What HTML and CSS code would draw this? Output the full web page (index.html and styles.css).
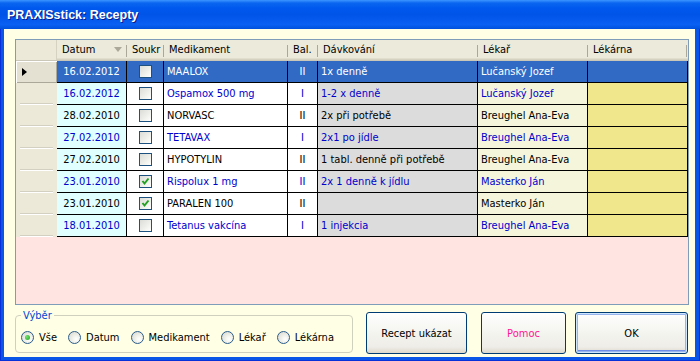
FILE: index.html
```html
<!DOCTYPE html>
<html lang="sk">
<head>
    <meta charset="UTF-8">
    <meta name="viewport" content="width=device-width, initial-scale=1.0">
    <title>PRAXISstick: Recepty</title>
    <link rel="stylesheet" href="styles.css">
</head>
<body>
    <div class="window">
        <div class="titlebar"><span class="title">PRAXISstick: Recepty</span></div>
        <div class="client">
            <div class="grid">
                <div class="row head">
                    <div class="rh corner"></div>
                    <div class="hc c-datum">Datum<span class="sort"></span></div>
                    <div class="hc c-soukr">Soukr</div>
                    <div class="hc c-med">Medikament</div>
                    <div class="hc c-bal">Bal.</div>
                    <div class="hc c-dav">Dávkování</div>
                    <div class="hc c-lekar">Lékař</div>
                    <div class="hc c-lekarna">Lékárna</div>
                </div>
                <div class="row sel">
                    <div class="rh current"><span class="arrow"></span></div>
                    <div class="cell c-datum">16.02.2012</div>
                    <div class="cell c-soukr"><span class="chk"></span></div>
                    <div class="cell c-med">MAALOX</div>
                    <div class="cell c-bal">II</div>
                    <div class="cell c-dav">1x denně</div>
                    <div class="cell c-lekar">Lučanský Jozef</div>
                    <div class="cell c-lekarna"></div>
                </div>
                <div class="row blue">
                    <div class="rh"></div>
                    <div class="cell c-datum">16.02.2012</div>
                    <div class="cell c-soukr"><span class="chk"></span></div>
                    <div class="cell c-med">Ospamox 500 mg</div>
                    <div class="cell c-bal">I</div>
                    <div class="cell c-dav">1-2 x denně</div>
                    <div class="cell c-lekar">Lučanský Jozef</div>
                    <div class="cell c-lekarna"></div>
                </div>
                <div class="row">
                    <div class="rh"></div>
                    <div class="cell c-datum">28.02.2010</div>
                    <div class="cell c-soukr"><span class="chk"></span></div>
                    <div class="cell c-med">NORVASC</div>
                    <div class="cell c-bal">II</div>
                    <div class="cell c-dav">2x při potřebě</div>
                    <div class="cell c-lekar">Breughel Ana-Eva</div>
                    <div class="cell c-lekarna"></div>
                </div>
                <div class="row blue">
                    <div class="rh"></div>
                    <div class="cell c-datum">27.02.2010</div>
                    <div class="cell c-soukr"><span class="chk"></span></div>
                    <div class="cell c-med">TETAVAX</div>
                    <div class="cell c-bal">I</div>
                    <div class="cell c-dav">2x1 po jídle</div>
                    <div class="cell c-lekar">Breughel Ana-Eva</div>
                    <div class="cell c-lekarna"></div>
                </div>
                <div class="row">
                    <div class="rh"></div>
                    <div class="cell c-datum">27.02.2010</div>
                    <div class="cell c-soukr"><span class="chk"></span></div>
                    <div class="cell c-med">HYPOTYLIN</div>
                    <div class="cell c-bal">II</div>
                    <div class="cell c-dav">1 tabl. denně při potřebě</div>
                    <div class="cell c-lekar">Breughel Ana-Eva</div>
                    <div class="cell c-lekarna"></div>
                </div>
                <div class="row blue">
                    <div class="rh"></div>
                    <div class="cell c-datum">23.01.2010</div>
                    <div class="cell c-soukr"><span class="chk checked"><svg viewBox="0 0 11 11" width="11" height="11"><path d="M2.5 5 L4.5 7.5 L8.5 2.5" fill="none" stroke="#21a121" stroke-width="2"/></svg></span></div>
                    <div class="cell c-med">Rispolux 1 mg</div>
                    <div class="cell c-bal">II</div>
                    <div class="cell c-dav">2x 1 denně k jídlu</div>
                    <div class="cell c-lekar">Masterko Ján</div>
                    <div class="cell c-lekarna"></div>
                </div>
                <div class="row">
                    <div class="rh"></div>
                    <div class="cell c-datum">23.01.2010</div>
                    <div class="cell c-soukr"><span class="chk checked"><svg viewBox="0 0 11 11" width="11" height="11"><path d="M2.5 5 L4.5 7.5 L8.5 2.5" fill="none" stroke="#21a121" stroke-width="2"/></svg></span></div>
                    <div class="cell c-med">PARALEN 100</div>
                    <div class="cell c-bal">II</div>
                    <div class="cell c-dav"></div>
                    <div class="cell c-lekar">Masterko Ján</div>
                    <div class="cell c-lekarna"></div>
                </div>
                <div class="row blue">
                    <div class="rh"></div>
                    <div class="cell c-datum">18.01.2010</div>
                    <div class="cell c-soukr"><span class="chk"></span></div>
                    <div class="cell c-med">Tetanus vakcína</div>
                    <div class="cell c-bal">I</div>
                    <div class="cell c-dav">1 injekcia</div>
                    <div class="cell c-lekar">Breughel Ana-Eva</div>
                    <div class="cell c-lekarna"></div>
                </div>
            </div>

            <div class="bottom">
                <fieldset class="groupbox">
                    <legend>Výběr</legend>
                    <label class="opt"><span class="radio on"></span>Vše</label>
                    <label class="opt"><span class="radio"></span>Datum</label>
                    <label class="opt"><span class="radio"></span>Medikament</label>
                    <label class="opt"><span class="radio"></span>Lékař</label>
                    <label class="opt"><span class="radio"></span>Lékárna</label>
                </fieldset>
                <button class="btn btn-recept">Recept ukázat</button>
                <button class="btn btn-pomoc">Pomoc</button>
                <button class="btn btn-ok">OK</button>
            </div>
        </div>
    </div>
</body>
</html>
```

FILE: styles.css
```css
* {
    box-sizing: border-box;
}
body {
    margin: 0;
    font-family: "DejaVu Sans Condensed", "Liberation Sans", sans-serif;
    font-size: 11px;
    background: #0055e5;
}
.window {
    width: 700px;
    height: 361px;
    display: flex;
    flex-direction: column;
    background: #0a56e6;
    box-shadow: inset 1px 0 #0831d9, inset -1px 0 #0831d9, inset 0 -1px #0831d9;
}
.titlebar {
    height: 29px;
    flex: none;
    display: flex;
    align-items: center;
    padding-left: 7px;
    background: linear-gradient(to bottom, #3d95ff 0, #0a66f0 3px, #0058ee 8px, #0054e8 50%, #0a60f2 85%, #0050dc 100%);
}
.title {
    color: #fff;
    font-family: "Liberation Sans", sans-serif;
    font-weight: bold;
    font-size: 12.5px;
    text-shadow: 1px 1px #0a1c8c;
}
.client {
    flex: 1;
    margin: 0 5px 4px 4px;
    background: #ffffe6;
    padding: 10px 6px 0 11px;
}

/* grid */
.grid {
    height: 266px;
    border: 1px solid #7f9db9;
    background: #ffe4e1;
}
.row {
    display: flex;
    height: 22px;
}
.row.head {
    height: 21px;
    background: #ebeadb;
    box-shadow: inset 0 -1px #cbc7b8, inset 0 -2px #d6d2c2, inset 0 -3px #e2decd;
}
.rh {
    width: 41px;
    flex: none;
    background: linear-gradient(#d3d0c2, #d3d0c2) 4px calc(100% - 1px) / 33px 1px no-repeat,
                linear-gradient(#fff, #fff) 4px 100% / 33px 1px no-repeat,
                #ece9d8;
    display: flex;
    align-items: center;
}
.rh.corner {
    background: #ece9d8;
    box-shadow: inset 0 -1px #cbc7b8, inset -1px 0 #d6d2c2;
}
.rh.current {
    background: #e4e1d2;
    box-shadow: inset 1px 1px #fff, inset -1px -1px #aca899;
    padding-left: 6px;
}
.arrow {
    width: 0;
    height: 0;
    border-left: 5px solid #000;
    border-top: 4.5px solid transparent;
    border-bottom: 4.5px solid transparent;
}
.hc {
    flex: none;
    display: flex;
    align-items: center;
    padding: 0 0 2px 5px;
    white-space: nowrap;
    overflow: hidden;
    color: #000;
    background: linear-gradient(#aca899, #aca899) 100% 5px / 1px 12px no-repeat;
}
.hc.c-lekarna {
    background: linear-gradient(#aca899, #aca899) calc(100% - 1px) 5px / 1px 12px no-repeat;
}
.sort {
    margin-left: auto;
    margin-right: 5px;
    width: 0;
    height: 0;
    border-top: 5px solid #aca899;
    border-left: 4.5px solid transparent;
    border-right: 4.5px solid transparent;
}
.cell {
    flex: none;
    display: flex;
    align-items: center;
    padding: 0 3px;
    border-right: 1px solid #000;
    border-bottom: 1px solid #000;
    white-space: nowrap;
    overflow: hidden;
    color: #000;
}
.blue .cell {
    color: #0000cd;
}
.c-datum { width: 70px; }
.c-soukr { width: 37px; }
.c-med { width: 124px; }
.c-bal { width: 30px; }
.c-dav { width: 160px; }
.c-lekar { width: 110px; }
.c-lekarna { width: 100px; }

.cell.c-datum {
    background: #e0ffff;
    justify-content: center;
}
.cell.c-soukr,
.cell.c-bal {
    justify-content: center;
    background: #fff;
}
.cell.c-med { background: #fff; }
.cell.c-dav { background: #dcdcdc; }
.cell.c-lekar { background: #f5f5dc; }
.cell.c-lekarna { background: #f0e68c; }

.row.sel .cell {
    background: #316ac5;
    color: #fff;
}

.chk {
    width: 13px;
    height: 13px;
    border: 1px solid #1c5180;
    background: linear-gradient(135deg, #dcdcd7 0%, #f0f0ec 60%, #fff 100%);
    display: flex;
}

/* bottom part */
.bottom {
    display: flex;
    align-items: flex-start;
    margin-top: 4px;
}
.groupbox {
    margin: 0 13px 0 0;
    width: 338px;
    height: 44px;
    padding: 0 5px;
    border: 1px solid #d0d0bf;
    border-radius: 4px;
    display: flex;
    align-items: center;
    gap: 11px;
}
.groupbox legend {
    color: #0046d5;
    padding: 0 2px;
    line-height: 13px;
}
.opt {
    display: flex;
    align-items: center;
    gap: 5px;
    color: #000;
}
.radio {
    width: 13px;
    height: 13px;
    border-radius: 50%;
    border: 1px solid #2a5c8a;
    background: radial-gradient(circle at 65% 65%, #fff 0%, #f0f0ea 40%, #d4d4cc 100%);
    display: flex;
    align-items: center;
    justify-content: center;
}
.radio.on::after {
    content: "";
    width: 5px;
    height: 5px;
    border-radius: 50%;
    background: radial-gradient(circle at 35% 35%, #6ee46e, #21a121);
}
.btn {
    height: 42px;
    margin-top: 3px;
    border: 1px solid #003c74;
    border-radius: 3px;
    background: linear-gradient(to bottom, #fff 0%, #f6f6f2 40%, #eeede7 85%, #dcd8cc 100%);
    font-family: inherit;
    font-size: 11px;
    color: #000;
    padding: 0;
}
.btn-recept {
    width: 101px;
}
.btn-pomoc {
    width: 85px;
    margin-left: 14px;
    color: #ff1493;
}
.btn-ok {
    width: 113px;
    margin-left: 9px;
    box-shadow: inset 0 0 0 1px #cee7ff, inset 0 0 0 2px #98b4ec, inset 0 -2px 0 1px #6d8de8;
}
```
